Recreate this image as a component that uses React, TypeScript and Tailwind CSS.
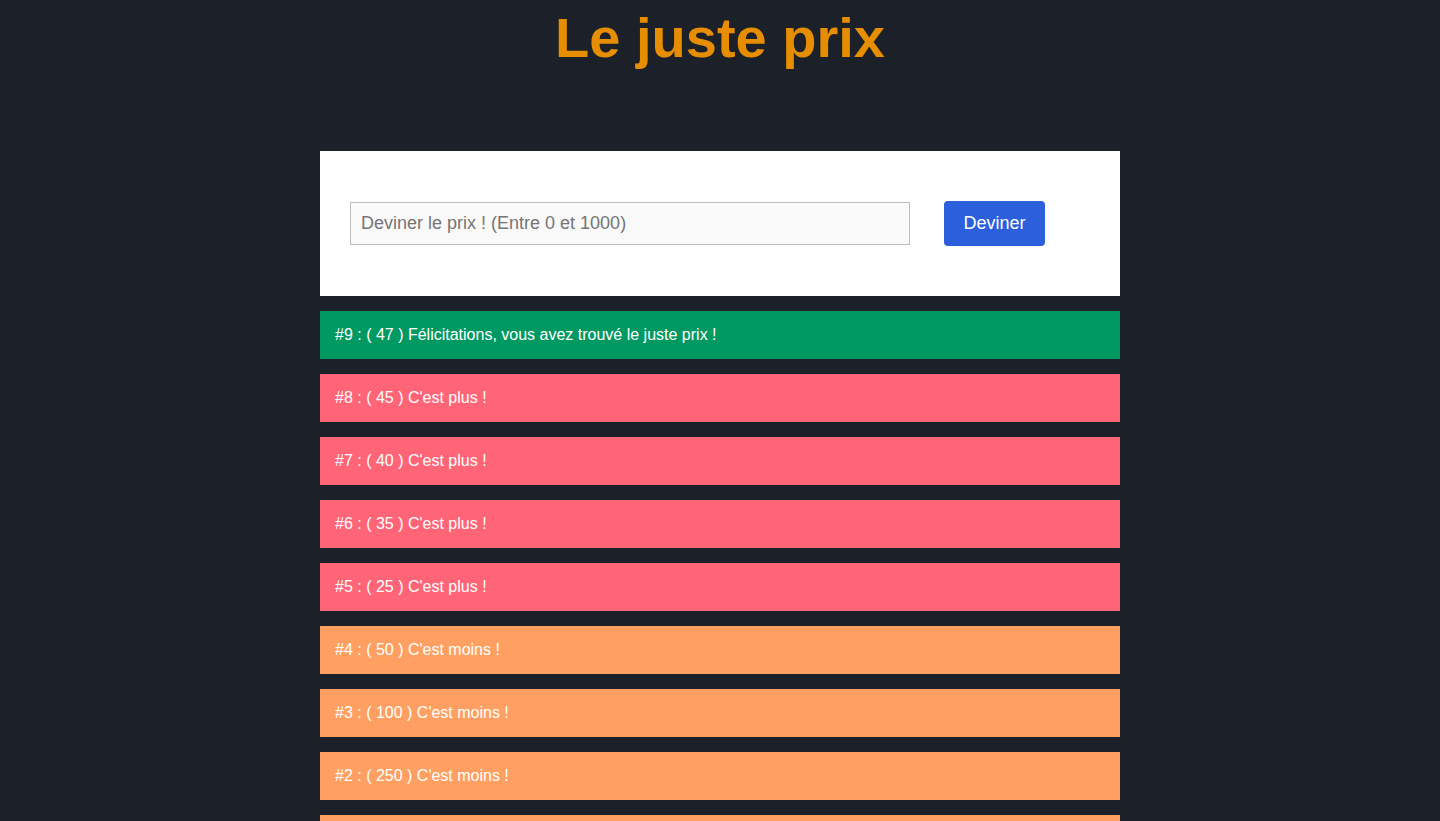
const guesses = [
  { n: 9, value: 47, text: 'Félicitations, vous avez trouvé le juste prix !', kind: 'win' },
  { n: 8, value: 45, text: "C'est plus !", kind: 'more' },
  { n: 7, value: 40, text: "C'est plus !", kind: 'more' },
  { n: 6, value: 35, text: "C'est plus !", kind: 'more' },
  { n: 5, value: 25, text: "C'est plus !", kind: 'more' },
  { n: 4, value: 50, text: "C'est moins !", kind: 'less' },
  { n: 3, value: 100, text: "C'est moins !", kind: 'less' },
  { n: 2, value: 250, text: "C'est moins !", kind: 'less' },
  { n: 1, value: 500, text: "C'est moins !", kind: 'less' },
];

const rowColor: Record<string, string> = {
  win: 'bg-[#019962]',
  more: 'bg-[#ff6577]',
  less: 'bg-[#ffa062]',
};

export default function App() {
  return (
    <div className="min-h-screen bg-[#1b2029] font-['Liberation_Sans',Arial,sans-serif] pb-10">
      <h1 className="pt-[6px] text-center text-[56px] leading-[64px] font-bold text-[#e68e00]">
        Le juste prix
      </h1>

      <div className="mx-auto mt-[81px] w-[800px]">
        <div className="flex items-center bg-white px-[30px] py-[50px]">
          <input
            type="text"
            placeholder="Deviner le prix ! (Entre 0 et 1000)"
            className="h-[43px] w-[560px] border border-[#bdbdbd] bg-[#f9f9f9] px-[10px] text-[18px] text-gray-700 placeholder:text-[#757575] outline-none"
          />
          <button className="ml-[34px] h-[45px] w-[101px] rounded-[4px] bg-[#2b5fdb] text-[18px] text-white">
            Deviner
          </button>
        </div>

        <div className="mt-[15px] flex flex-col gap-[15px]">
          {guesses.map((g) => (
            <div
              key={g.n}
              className={`flex h-[48px] items-center px-[15px] text-[16px] text-white ${rowColor[g.kind]}`}
            >
              #{g.n} : ( {g.value} ) {g.text}
            </div>
          ))}
        </div>
      </div>
    </div>
  );
}
